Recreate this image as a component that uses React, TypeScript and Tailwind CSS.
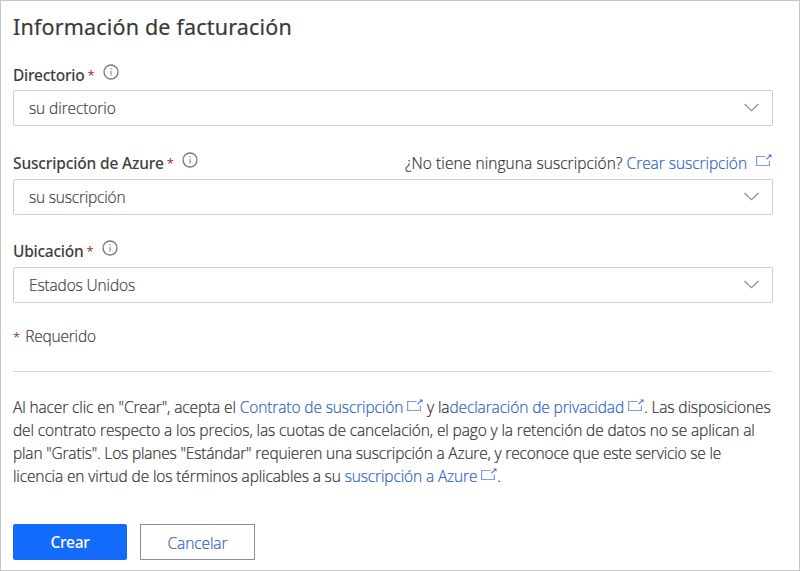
import type { ReactNode } from "react";

function InfoIcon({ className = "" }: { className?: string }) {
  return (
    <svg className={`h-4 w-4 shrink-0 ${className}`} viewBox="0 0 16 16" fill="none">
      <circle cx="8" cy="8" r="7" stroke="#777b80" strokeWidth="1.3" />
      <path d="M8 6.9v4.6" stroke="#8fa3b8" strokeWidth="1.4" />
      <circle cx="8" cy="4.9" r=".8" fill="#c09a72" />
    </svg>
  );
}

function ExternalIcon({ className = "" }: { className?: string }) {
  return (
    <svg className={`inline-block h-[13px] w-4 shrink-0 ${className}`} viewBox="0 0 16 13" fill="none">
      <path d="M9.6 2.5H.6v9h12.8V6.8" stroke="#7c9ef0" strokeWidth="1.2" />
      <path d="M10.4 5.2 14.6 1.2" stroke="#5c88e4" strokeWidth="1.2" />
      <path d="M12.3 .5h3.2v3.2z" fill="#4779dc" />
    </svg>
  );
}

function Label({ children, className }: { children: ReactNode; className: string }) {
  return (
    <div className="flex h-6 items-center whitespace-nowrap text-[#3f3e3d]">
      <span className={`font-['Noto_Sans','Open_Sans',sans-serif] font-medium ${className}`}>{children}</span>
      <span className="ml-[3px] text-[13px] font-medium text-[#a4262c]">*</span>
      <InfoIcon className="mb-[7px] ml-2" />
    </div>
  );
}

function Select({ value, className }: { value: string; className: string }) {
  return (
    <div className="flex h-9 items-center justify-between rounded-[2px] border border-[#cdcdcd] pl-[15px] pr-[13px] text-[#434241]">
      <span className={className}>{value}</span>
      <svg className="mb-[2px] h-[9px] w-[15px]" viewBox="0 0 15 9" fill="none">
        <path d="M.6 1 7.5 7.8 14.4 1" stroke="#85888c" strokeWidth="1.1" />
      </svg>
    </div>
  );
}

export default function App() {
  return (
    <div className="h-[571px] w-[800px] border border-[#c6c6c6] bg-white pl-3 pr-[26px] pt-[11px] font-['Open_Sans','Noto_Sans',sans-serif] text-[15.5px] font-light leading-6 text-[#333231] [-webkit-text-stroke:0.2px]">
      <h1 className="h-[30px] whitespace-nowrap font-['Noto_Sans','Open_Sans',sans-serif] text-[21.5px] font-normal leading-[30px] tracking-[0.18px] text-[#3b3a39]">Información de facturación</h1>

      <div className="mt-[21px] [-webkit-text-stroke:0px]">
        <Label className="tracking-[-0.25px]">Directorio</Label>
        <div className="mt-[3px] [-webkit-text-stroke:0.2px]">
          <Select value="su directorio" className="tracking-[-0.1px]" />
        </div>
      </div>

      <div className="mt-[25px]">
        <div className="flex justify-between [-webkit-text-stroke:0px]">
          <Label className="tracking-[-0.15px]">Suscripción de Azure</Label>
          <div className="flex h-6 items-center whitespace-nowrap pr-px [-webkit-text-stroke:0.2px]">
            <span className="tracking-[0.07px]">¿No tiene ninguna suscripción?</span>
            <a className="ml-1 tracking-[-0.05px] text-[#2d63c4]">Crear suscripción</a>
            <ExternalIcon className="mb-[6px] ml-[9px]" />
          </div>
        </div>
        <div className="mt-1">
          <Select value="su suscripción" className="tracking-[-0.2px]" />
        </div>
      </div>

      <div className="mt-6 [-webkit-text-stroke:0px]">
        <Label className="tracking-[-0.25px]">Ubicación</Label>
        <div className="mt-1 [-webkit-text-stroke:0.2px]">
          <Select value="Estados Unidos" className="tracking-[-0.15px]" />
        </div>
      </div>

      <p className="mt-[21px] h-6 whitespace-nowrap text-[#434241]">
        <span className="mr-[5px] text-[13px] text-[#a4262c]">*</span>
        <span className="tracking-[-0.2px]">Requerido</span>
      </p>

      <hr className="mt-[23px] border-[#d6d6d6]" />

      <div className="mt-6 whitespace-nowrap leading-[23px]">
        <p className="h-[23px] tracking-[-0.12px]">
          Al hacer clic en "Crear", acepta el <a className="text-[#2d63c4]">Contrato de suscripción</a>{" "}
          <ExternalIcon className="mb-[6px]" /> y la<a className="text-[#2d63c4]">declaración de privacidad</a>{" "}
          <ExternalIcon className="mb-[6px]" />. Las disposiciones
        </p>
        <p className="h-[23px] tracking-[-0.125px]">
          del contrato respecto a los precios, las cuotas de cancelación, el pago y la retención de datos no se aplican al
        </p>
        <p className="h-[23px] tracking-[-0.185px]">
          plan "Gratis". Los planes "Estándar" requieren una suscripción a Azure, y reconoce que este servicio se le
        </p>
        <p className="h-[23px] tracking-[-0.13px]">
          licencia en virtud de los términos aplicables a su <a className="text-[#2d63c4]">suscripción a Azure</a>{" "}
          <ExternalIcon className="mb-[6px]" />.
        </p>
      </div>

      <div className="mt-9 flex gap-[13px]">
        <button className="h-9 w-[114px] rounded-[2px] bg-[#136bfb] font-['Noto_Sans','Open_Sans',sans-serif] font-medium tracking-[-0.25px] text-white [-webkit-text-stroke:0px]">Crear</button>
        <button className="h-9 w-[115px] border border-[#8e8e8e] pt-[2px] tracking-[-0.1px] text-[#2d63c4]">Cancelar</button>
      </div>
    </div>
  );
}
